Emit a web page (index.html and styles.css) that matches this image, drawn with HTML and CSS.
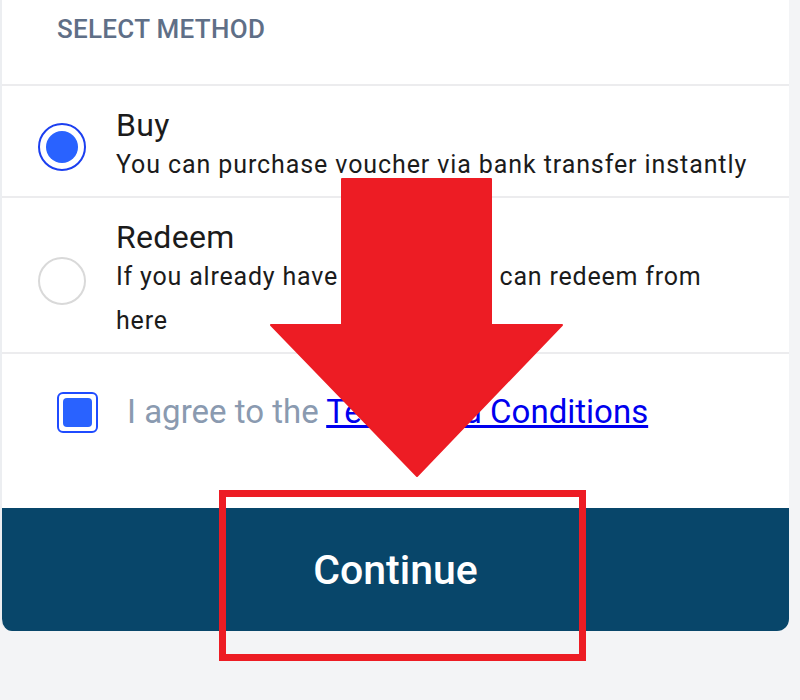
FILE: index.html
```html
<!DOCTYPE html>
<html lang="en">
<head>
<meta charset="utf-8">
<title>Select Method</title>
<link rel="stylesheet" href="styles.css">
</head>
<body>
<div class="page">
  <div class="card">
    <div class="header">SELECT METHOD</div>
    <div class="option">
      <span class="radio checked"><span class="dot"></span></span>
      <div class="option-text">
        <div class="title">Buy</div>
        <div class="desc">You can purchase voucher via bank transfer instantly</div>
      </div>
    </div>
    <div class="option">
      <span class="radio"></span>
      <div class="option-text">
        <div class="title">Redeem</div>
        <div class="desc desc-tight">If you already have voucher, you can redeem from here</div>
      </div>
    </div>
    <div class="agree">
      <span class="checkbox"><span class="fill"></span></span>
      <span class="agree-text">I agree to the <a href="#" class="link">Terms and Conditions</a></span>
    </div>
    <button class="continue">Continue</button>
  </div>
  <svg class="annot" width="800" height="700" viewBox="0 0 800 700">
    <polygon points="342,179 491,179 491,325 562,325 417,476 271,325 342,325" fill="#ed1c24" stroke="#ed1c24" stroke-width="2" stroke-linejoin="round"/>
    <rect x="222.5" y="493.5" width="360" height="164" fill="none" stroke="#ed1c24" stroke-width="7"/>
  </svg>
</div>
</body>
</html>
```

FILE: styles.css
```css
* { box-sizing: border-box; }
html, body { margin: 0; padding: 0; }
body {
  background: #f3f4f6;
  font-family: Roboto, "Liberation Sans", sans-serif;
  width: 800px;
  height: 700px;
  overflow: hidden;
}
.page { position: relative; width: 800px; height: 700px; }
.card {
  width: 789px;
  background: #ffffff;
  border-left: 2px solid #eceef1;
  border-radius: 0 0 12px 12px;
  overflow: hidden;
  display: flex;
  flex-direction: column;
}
.header {
  height: 86px;
  padding: 14px 0 0 55px;
  font-size: 26px;
  line-height: 30px;
  font-weight: 500;
  letter-spacing: 0.3px;
  color: #5f6f87;
  border-bottom: 2px solid #ececee;
}
.option {
  display: flex;
  align-items: center;
  gap: 30px;
  padding: 21px 40px 9px 36px;
  border-bottom: 2px solid #ececee;
}
.radio {
  flex: none;
  width: 48px;
  height: 48px;
  border-radius: 50%;
  border: 2px solid #d9d9d9;
  display: flex;
  align-items: center;
  justify-content: center;
}
.radio.checked { border: 2px solid #1c3ff0; }
.dot { width: 32px; height: 32px; border-radius: 50%; background: #2962ff; }
.option-text { color: #1b1b1b; }
.title { font-size: 32px; line-height: 36px; letter-spacing: 0.3px; }
.desc { font-size: 25px; line-height: 44px; letter-spacing: 0.9px; }
.desc-tight { letter-spacing: 0.8px; }
.agree {
  height: 154px;
  display: flex;
  align-items: flex-start;
  gap: 29px;
  padding: 38px 0 0 55px;
}
.checkbox {
  flex: none;
  width: 41px;
  height: 41px;
  border: 2px solid #1f4bff;
  border-radius: 6px;
  display: flex;
  align-items: center;
  justify-content: center;
}
.fill { width: 29px; height: 29px; background: #2962ff; border-radius: 4px; }
.agree-text {
  font-size: 33px;
  line-height: 40px;
  color: #8a9ab0;
}
.link { color: #0000ee; text-decoration: underline; }
.continue {
  height: 123px;
  border: none;
  background: #08466a;
  color: #ffffff;
  font-family: Roboto, "Liberation Sans", sans-serif;
  font-size: 41px;
  font-weight: 500;
  display: flex;
  align-items: center;
  justify-content: center;
  padding: 0;
}
.annot { position: absolute; left: 0; top: 0; pointer-events: none; }
```
